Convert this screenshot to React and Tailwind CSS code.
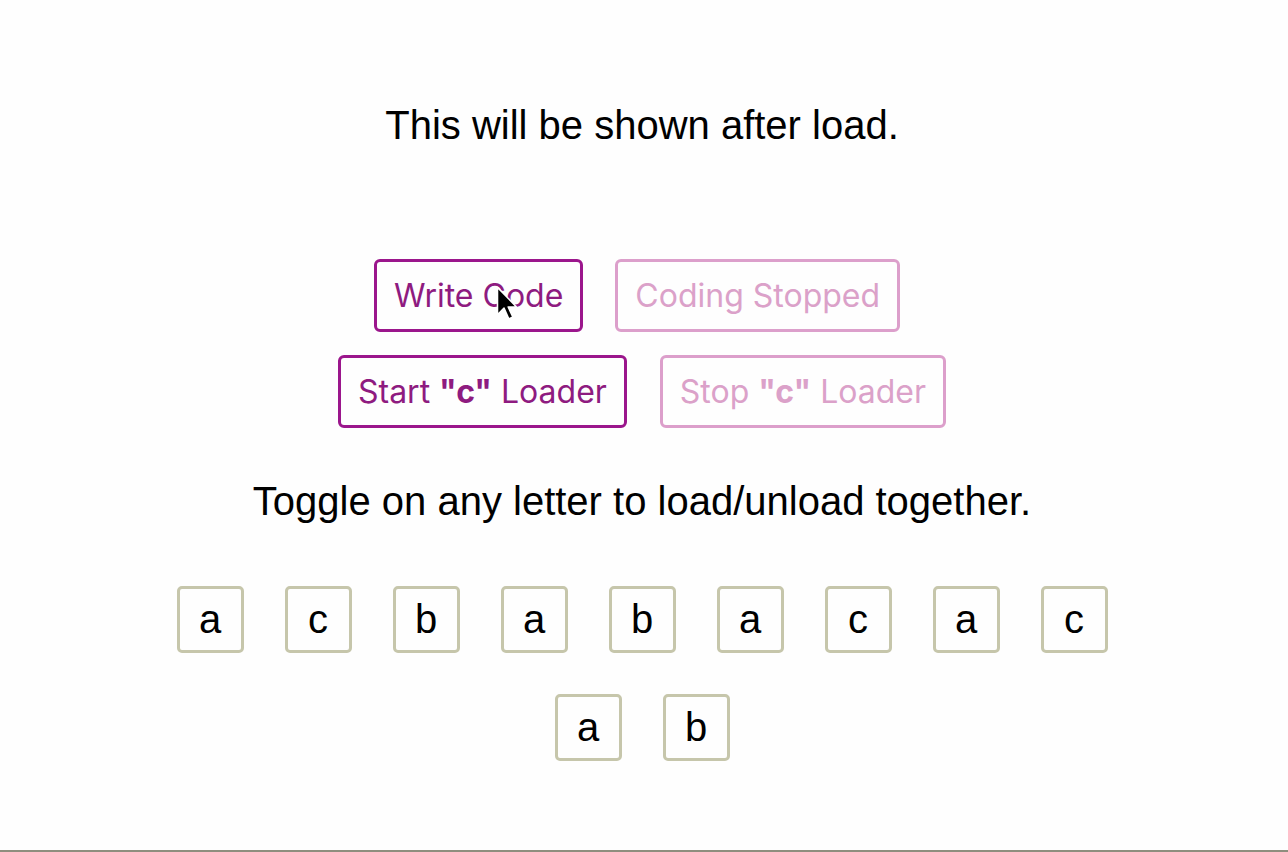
import React from 'react';

// Lazy-loader demo page: two control rows, then a grid of letter toggles.

const letters = ['a', 'c', 'b', 'a', 'b', 'a', 'c', 'a', 'c', 'a', 'b'];

function ActionButton({ children, disabled }) {
  return (
    <button
      className={`h-[73px] px-[17px] flex items-center border-[3px] rounded-[6px] bg-transparent text-[32px] leading-[38px] font-['Inter',sans-serif] ${
        disabled ? 'border-[#dc9fcb] text-[#dba1c9]' : 'border-[#9b168c] text-[#8e1b80]'
      }`}
    >
      {children}
    </button>
  );
}

function Cursor() {
  return (
    <svg className="absolute left-[495px] top-[285px]" width="24" height="38" viewBox="0 0 20 32">
      <path
        d="M2 2 L2 25 L7.5 19.5 L11.5 28.5 L15 27 L11 18.5 L18 18.5 Z"
        fill="#000"
        stroke="#fff"
        strokeWidth="1.3"
        strokeLinejoin="round"
      />
    </svg>
  );
}

export default function App() {
  return (
    <div className="relative h-[852px] bg-[#fefefe] border-b-2 border-[#8e8e7e] font-['Liberation_Sans',Arial,sans-serif] text-black">
      <div className="flex flex-col items-center pr-[4px]">
        <h1 className="mt-[102px] text-[40px] leading-[46px] font-normal">This will be shown after load.</h1>

        <div className="mt-[111px] mr-[10px] flex gap-8">
          <ActionButton>Write Code</ActionButton>
          <ActionButton disabled>Coding Stopped</ActionButton>
        </div>
        <div className="mt-[23px] flex gap-[33px]">
          <ActionButton>
            Start&nbsp;<b>"c"</b>&nbsp;Loader
          </ActionButton>
          <ActionButton disabled>
            Stop&nbsp;<b>"c"</b>&nbsp;Loader
          </ActionButton>
        </div>

        <p className="mt-[50px] text-[40px] leading-[46px]">Toggle on any letter to load/unload together.</p>

        <div className="mt-[41px] w-[1000px] flex flex-wrap justify-center">
          {letters.map((l, i) => (
            <div
              key={i}
              className="m-[20.5px] w-[67px] h-[67px] flex items-center justify-center border-[3px] border-[#c6c6ab] rounded-[5px] text-[40px] leading-none"
            >
              {l}
            </div>
          ))}
        </div>
      </div>
      <Cursor />
    </div>
  );
}
